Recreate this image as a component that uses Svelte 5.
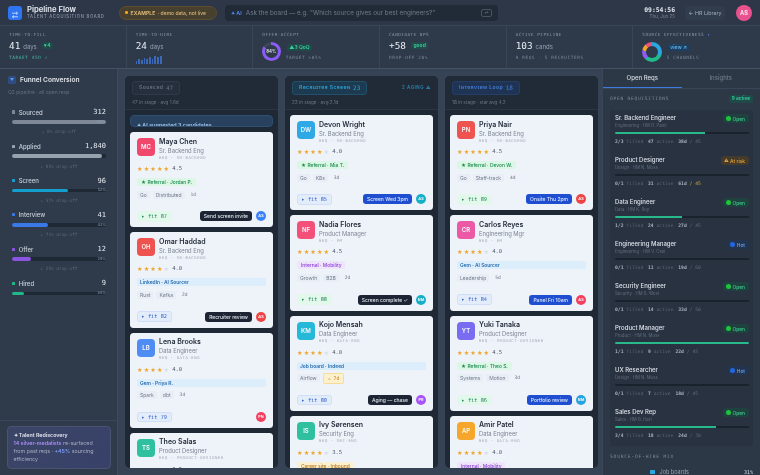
<script>
  const funnel = [
    { n: 'Sourced', c: '312', w: 100, col: '#7d8796', dot: '#7d8796', p: '100%', drop: '↓ 0% drop-off' },
    { n: 'Applied', c: '1,840', w: 96, col: '#98a1ae', dot: '#98a1ae', p: '', drop: '↓ 95% drop-off' },
    { n: 'Screen', c: '96', w: 60, col: '#159fd0', dot: '#159fd0', p: '52%', drop: '↓ 57% drop-off' },
    { n: 'Interview', c: '41', w: 38, col: '#3a78e6', dot: '#3a78e6', p: '43%', drop: '↓ 71% drop-off' },
    { n: 'Offer', c: '12', w: 20, col: '#8a55e0', dot: '#8a55e0', p: '29%', drop: '↓ 25% drop-off' },
    { n: 'Hired', c: '9', w: 13, col: '#1fb98a', dot: '#1fb98a', p: '84%', drop: '' }
  ];
  const cols = [
    {
      key: 'sourced', title: 'Sourced', num: '47', sub: '47 in stage · avg 1.6d', ai: true,
      cards: [
        { i: 'MC', g: '#f0476c', n: 'Maya Chen', r: 'Sr. Backend Eng', q: 'SR-BACKEND', s: 5, v: '4.5', t: 'Referral · Jordan P.', k: 'ref', sk: ['Go', 'Distributed'], d: '1d', fit: '87', ft: 'g', a: 'Send screen invite', ac: 'dark', o: 'AS', oc: '#3b82f6' },
        { i: 'OH', g: '#ee5350', n: 'Omar Haddad', r: 'Sr. Backend Eng', q: 'SR-BACKEND', s: 4, v: '4.0', t: 'LinkedIn · AI Sourcer', k: 'wide', sk: ['Rust', 'Kafka'], d: '2d', fit: '82', ft: 'b', a: 'Recruiter review', ac: 'dark', o: 'AS', oc: '#ef4444' },
        { i: 'LB', g: '#4f8df5', n: 'Lena Brooks', r: 'Data Engineer', q: 'DATA-ENG', s: 4, v: '4.0', t: 'Gem · Priya R.', k: 'wide', sk: ['Spark', 'dbt'], d: '3d', fit: '79', ft: 'b', a: '', o: 'PN', oc: '#f43f5e' },
        { i: 'TS', g: '#2fc0a0', n: 'Theo Salas', r: 'Product Designer', q: 'PRODUCT-DESIGNER', s: 4, v: '3.5', t: '', k: '', sk: [], d: '', fit: '', ft: 'b', a: '' }
      ]
    },
    {
      key: 'screen', title: 'Recruiter Screen', num: '23', sub: '23 in stage · avg 2.1d', aging: '2 AGING ⚠',
      cards: [
        { i: 'DW', g: '#2fa9e6', n: 'Devon Wright', r: 'Sr. Backend Eng', q: 'SR-BACKEND', s: 4, v: '4.0', t: 'Referral · Mia T.', k: 'ref', sk: ['Go', 'K8s'], d: '3d', fit: '85', ft: 'b', a: 'Screen Wed 3pm', ac: 'blue', o: 'AS', oc: '#14b0c8' },
        { i: 'NF', g: '#f4517a', n: 'Nadia Flores', r: 'Product Manager', q: 'PM', s: 5, v: '4.5', t: 'Internal · Mobility', k: 'int', sk: ['Growth', 'B2B'], d: '2d', fit: '88', ft: 'g', a: 'Screen complete ✓', ac: 'dark', o: 'NM', oc: '#14b0c8' },
        { i: 'KM', g: '#25b8d8', n: 'Kojo Mensah', r: 'Data Engineer', q: 'DATA-ENG', s: 4, v: '4.0', t: 'Job board · Indeed', k: 'wide', sk: ['Airflow'], warn: '⚠ 7d', d: '', fit: '80', ft: 'b', a: 'Aging — chase', ac: 'dark', o: 'PR', oc: '#a855f7' },
        { i: 'IS', g: '#2fc0a0', n: 'Ivy Sørensen', r: 'Security Eng', q: 'SEC-ENG', s: 4, v: '3.5', t: 'Career site · Inbound', k: 'car', sk: [], d: '', fit: '', ft: 'b', a: '' }
      ]
    },
    {
      key: 'loop', title: 'Interview Loop', num: '18', sub: '18 in stage · star avg 4.2',
      cards: [
        { i: 'PN', g: '#ee5350', n: 'Priya Nair', r: 'Sr. Backend Eng', q: 'SR-BACKEND', s: 5, v: '4.5', t: 'Referral · Devon W.', k: 'ref', sk: ['Go', 'Staff-track'], d: '4d', fit: '89', ft: 'g', a: 'Onsite Thu 2pm', ac: 'blue', o: 'AS', oc: '#ef4444' },
        { i: 'CR', g: '#ec5aa5', n: 'Carlos Reyes', r: 'Engineering Mgr', q: 'EM', s: 4, v: '4.0', t: 'Gem · AI Sourcer', k: 'wide', sk: ['Leadership'], d: '5d', fit: '84', ft: 'b', a: 'Panel Fri 10am', ac: 'blue', o: 'AS', oc: '#f43f5e' },
        { i: 'YT', g: '#7a6cf0', n: 'Yuki Tanaka', r: 'Product Designer', q: 'PRODUCT-DESIGNER', s: 5, v: '4.5', t: 'Referral · Theo S.', k: 'ref', sk: ['Systems', 'Motion'], d: '3d', fit: '86', ft: 'g', a: 'Portfolio review', ac: 'blue', o: 'NM', oc: '#25a5e0' },
        { i: 'AP', g: '#f5a62b', n: 'Amir Patel', r: 'Data Engineer', q: 'DATA-ENG', s: 4, v: '4.0', t: 'Internal · Mobility', k: 'int', sk: [], d: '', fit: '', ft: 'b', a: '' }
      ]
    }
  ];
  const reqs = [
    { n: 'Sr. Backend Engineer', m: 'Engineering · HM R. Patel', st: 'Open', f: '2/3', a: '47', d: '38d', l: '45', w: 67 },
    { n: 'Product Designer', m: 'Design · HM N. Moss', st: 'At risk', f: '0/1', a: '31', d: '61d', l: '45', w: 0, over: true },
    { n: 'Data Engineer', m: 'Data · HM K. Roy', st: 'Open', f: '1/2', a: '24', d: '27d', l: '45', w: 50 },
    { n: 'Engineering Manager', m: 'Engineering · HM V. Osei', st: 'Hot', f: '0/1', a: '11', d: '19d', l: '60', w: 0 },
    { n: 'Security Engineer', m: 'Security · HM S. West', st: 'Open', f: '0/1', a: '14', d: '33d', l: '50', w: 0 },
    { n: 'Product Manager', m: 'Product · HM N. Moss', st: 'Open', f: '1/1', a: '9', d: '22d', l: '45', w: 100 },
    { n: 'UX Researcher', m: 'Design · HM N. Moss', st: 'Hot', f: '0/1', a: '7', d: '18d', l: '45', w: 0 },
    { n: 'Sales Dev Rep', m: 'Sales · HM B. Hart', st: 'Open', f: '3/4', a: '18', d: '24d', l: '30', w: 75 }
  ];
  const spark = [3, 5, 4, 6, 5, 7, 5, 8, 7, 8];
  const stClass = { Open: 'open', 'At risk': 'risk', Hot: 'hot' };
</script>

<div class="app">
  <header class="top">
    <div class="logo">
      <svg viewBox="0 0 14 14" width="14" height="14"><path d="M4 5.2h5.5M8 3.8l1.6 1.4L8 6.6M10 8.8H4.5M6 7.4L4.4 8.8 6 10.2" fill="none" stroke="#dbe8ff" stroke-width=".8"/></svg>
    </div>
    <div class="brand">
      <div class="bt">Pipeline Flow</div>
      <div class="bs">TALENT ACQUISITION BOARD</div>
    </div>
    <div class="example"><i></i><b>EXAMPLE</b> · demo data, not live</div>
    <div class="ask">
      <span class="aitag">✦ AI</span>
      <span class="ph">Ask the board — e.g. "Which source gives our best engineers?"</span>
      <span class="kbd">↵</span>
    </div>
    <div class="clock"><div class="tm">09:54:56</div><div class="dt">Thu, Jun 25</div></div>
    <div class="lib">← HR Library</div>
    <div class="me">AS</div>
  </header>

  <section class="kpis">
    <div class="kpi">
      <div class="kl">TIME-TO-FILL</div>
      <div class="kv"><strong>41</strong><span>days</span><em class="chip">▾4</em></div>
      <div class="kf green">TARGET 45D ✓</div>
    </div>
    <div class="kpi">
      <div class="kl">TIME-TO-HIRE</div>
      <div class="kv"><strong>24</strong><span>days</span></div>
      <div class="spark">{#each spark as h}<i style="height:{h}px"></i>{/each}</div>
    </div>
    <div class="kpi">
      <div class="kl">OFFER-ACCEPT</div>
      <div class="kr">
        <div class="ring"><span>84%</span></div>
        <div class="kc"><em class="chip">▲3 QoQ</em><div class="kf">TARGET &gt;85%</div></div>
      </div>
    </div>
    <div class="kpi">
      <div class="kl">CANDIDATE NPS</div>
      <div class="kv"><strong>+58</strong><em class="chip mid">good</em></div>
      <div class="kf">DROP-OFF 28%</div>
    </div>
    <div class="kpi">
      <div class="kl">ACTIVE PIPELINE</div>
      <div class="kv"><strong>103</strong><span>cands</span></div>
      <div class="kf">9 REQS · 5 RECRUITERS</div>
    </div>
    <div class="kpi">
      <div class="kl">SOURCE EFFECTIVENESS <u>✦</u></div>
      <div class="kr">
        <div class="donut"></div>
        <div class="kc"><em class="chip bl">view ↗</em><div class="kf">5 CHANNELS</div></div>
      </div>
    </div>
  </section>

  <main class="body">
    <aside class="left">
      <div class="ftitle"><span class="fi">▼</span>Funnel Conversion</div>
      <div class="fsub">Q2 pipeline · all open reqs</div>
      <div class="frows">
        {#each funnel as f}
          <div class="frow">
            <div class="fh"><i style="background:{f.dot}"></i><span>{f.n}</span><b>{f.c}</b></div>
            <div class="ftrack"><div class="ffill" style="width:{f.w}%;background:{f.col}"></div>{#if f.p}<small>{f.p}</small>{/if}</div>
            {#if f.drop}<div class="fdrop">{f.drop}</div>{/if}
          </div>
        {/each}
      </div>
      <div class="lfoot">
        <div class="redis">
          <div class="rt">✦ Talent Rediscovery</div>
          <p><b>14 silver-medalists</b> re-surfaced from past reqs · <b class="bb">+45%</b> sourcing efficiency</p>
        </div>
      </div>
    </aside>

    <div class="board">
      {#each cols as c}
        <div class="col">
          <div class="ch">
            <div class="chr">
              <span class="stage {c.key}">{c.title}<b>{c.num}</b></span>
              {#if c.aging}<span class="aging">{c.aging}</span>{/if}
            </div>
            <div class="csub">{c.sub}</div>
          </div>
          <div class="cards">
            {#if c.ai}<div class="aib">✦ AI suggested 3 candidates</div>{/if}
            {#each c.cards as d}
              <article class="card">
                <div class="ctop">
                  <div class="av" style="background:{d.g}">{d.i}</div>
                  <div class="who">
                    <div class="nm">{d.n}</div>
                    <div class="rl">{d.r}</div>
                    <div class="rq">REQ · {d.q}</div>
                  </div>
                </div>
                <div class="stars"><span class="on">{'★'.repeat(d.s)}</span><span class="off">{'★'.repeat(5 - d.s)}</span><b>{d.v}</b></div>
                <div class="tagl">{#if d.t}<span class="tag {d.k}">{d.k === 'ref' ? '★ ' : ''}{d.t}</span>{/if}</div>
                <div class="skills">
                  {#each d.sk as s}<span>{s}</span>{/each}
                  {#if d.warn}<span class="warn">{d.warn}</span>{/if}
                  {#if d.d}<span class="age">{d.d}</span>{/if}
                </div>
                <div class="cf">
                  {#if d.fit}<span class="fit {d.ft}">▸ fit {d.fit}</span>{/if}
                  {#if d.a}<span class="act {d.ac}">{d.a}</span>{/if}
                  {#if d.o}<span class="own" style="background:{d.oc}">{d.o}</span>{/if}
                </div>
              </article>
            {/each}
          </div>
        </div>
      {/each}
    </div>

    <aside class="right">
      <div class="tabs"><span class="tab on">Open Reqs</span><span class="tab">Insights</span></div>
      <div class="sech"><span>OPEN REQUISITIONS</span><em>9 active</em></div>
      <div class="reqs">
        {#each reqs as r}
          <div class="req">
            <div class="rh">
              <div><div class="rn">{r.n}</div><div class="rm">{r.m}</div></div>
              <span class="st {stClass[r.st]}"><i></i>{r.st}</span>
            </div>
            <div class="rb"><div style="width:{r.w}%"></div></div>
            <div class="rs"><b>{r.f}</b> filled <b>{r.a}</b> active <b>{r.d}</b> <span class:over={r.over}>/ {r.l}</span></div>
          </div>
        {/each}
      </div>
      <div class="mix">SOURCE-OF-HIRE MIX</div>
      <div class="mixrow"><i></i><span>Job boards</span><b>31%</b></div>
    </aside>
  </main>
</div>

<style>
  :global(body) { margin: 0; background: #364354; }
  .app {
    width: 760px; height: 475px; overflow: hidden; display: flex; flex-direction: column;
    font-family: Inter, "Liberation Sans", sans-serif; color: #e6ebf2; background: #364354;
    filter: blur(0.4px);
  }
  .top { height: 26px; flex: none; display: flex; align-items: center; padding: 0 8px; background: #2d3747; box-sizing: border-box; border-bottom: 1px solid #3a4555; }
  .logo { width: 14px; height: 14px; border-radius: 3px; background: #2f75f2; flex: none; }
  .brand { margin-left: 5px; width: 92px; flex: none; }
  .bt { font-size: 7.7px; font-weight: 600; line-height: 8px; color: #e8edf4; white-space: nowrap; }
  .bs { font-size: 4.2px; letter-spacing: .72px; line-height: 5.5px; color: #8e98a8; font-weight: 500; white-space: nowrap; }
  .example { display: flex; align-items: center; width: 98px; height: 14px; box-sizing: border-box; border-radius: 7px; background: #48402f; border: 1px solid #5c4c30; padding-left: 5px; font-size: 5px; font-weight: 500; color: #dcb877; white-space: pre; flex: none; }
  .example i { width: 2.5px; height: 2.5px; border-radius: 50%; background: #f5a524; margin-right: 3px; }
  .example b { font-weight: 700; letter-spacing: .1px; margin-right: 1px; }
  .ask { margin-left: 8px; width: 273px; height: 16px; background: #212a37; border-radius: 4px; display: flex; align-items: center; padding: 0 6px; box-sizing: border-box; flex: none; }
  .aitag { color: #4f8df5; font-size: 5.4px; font-weight: 600; margin-right: 4px; white-space: nowrap; }
  .ph { color: #707b8c; font-size: 6.3px; white-space: nowrap; flex: 1; }
  .kbd { width: 11px; height: 8px; border: 1px solid #475262; border-radius: 2px; box-sizing: border-box; font-size: 4px; line-height: 6px; text-align: center; color: #8a95a5; }
  .clock { margin-left: auto; text-align: right; width: 31px; flex: none; }
  .tm { font: 600 6.4px/7px "DejaVu Sans Mono", monospace; color: #dfe5ed; white-space: nowrap; }
  .dt { font-size: 4.5px; line-height: 5px; color: #7a8596; white-space: nowrap; }
  .lib { margin-left: 10px; width: 40px; height: 14px; border-radius: 4px; background: #313c4c; color: #a3adbb; font-size: 5.3px; line-height: 14px; text-align: center; white-space: nowrap; flex: none; }
  .me { margin-left: 11px; width: 16px; height: 16px; border-radius: 50%; background: #e9528f; color: #fbe4ee; font-size: 5.6px; font-weight: 700; text-align: center; line-height: 16px; flex: none; }

  .kpis { height: 43px; flex: none; display: grid; grid-template-columns: repeat(6, 1fr); background: #2e3949; border-bottom: 1px solid #465263; box-sizing: border-box; }
  .kpi { border-right: 1px solid #3a4656; padding: 6px 9px 0; box-sizing: border-box; overflow: hidden; }
  .kpi:last-child { border-right: 0; }
  .kl { font: 500 4.3px/5px "DejaVu Sans Mono", monospace; letter-spacing: .5px; color: #8d97a6; white-space: nowrap; }
  .kl u { text-decoration: none; color: #4f8df5; }
  .kv { display: flex; align-items: center; height: 13px; margin-top: 2px; white-space: nowrap; }
  .kv strong { font: 500 9.4px/12px "DejaVu Sans Mono", monospace; color: #e9edf3; }
  .kv span { font-size: 6px; color: #98a2b1; margin: 1px 0 0 3px; }
  .chip { font-style: normal; font-size: 5px; font-weight: 600; height: 7.5px; line-height: 7.5px; padding: 0 2.5px; border-radius: 1.5px; background: #1f4a47; color: #37cfa0; display: inline-block; white-space: nowrap; }
  .kv .chip { margin-left: 5px; }
  .kv .chip.mid { margin-left: 5px; background: #234a48; }
  .chip.bl { background: #1f3f5e; color: #5cb1f0; }
  .kf { font: 500 4.4px/5px "DejaVu Sans Mono", monospace; letter-spacing: .6px; color: #7c8696; margin-top: 2.5px; white-space: nowrap; }
  .kf.green { color: #4ab9a2; }
  .spark { display: flex; align-items: flex-end; gap: 1px; height: 9px; margin-top: 2.5px; }
  .spark i { width: 1.7px; background: #3c68b5; display: block; }
  .kr { display: flex; align-items: center; height: 20px; margin-top: 4.5px; margin-left: -.5px; gap: 5px; }
  .kc .kf { margin-top: 3.5px; }
  .kc .chip { display: block; width: fit-content; margin-left: 1px; }
  .ring { width: 19px; height: 19px; border-radius: 50%; background: conic-gradient(#8b5cf6 0 84%, #3d4759 84%); display: flex; align-items: center; justify-content: center; flex: none; }
  .ring span { width: 13px; height: 13px; border-radius: 50%; background: #2e3949; font-size: 4.3px; font-weight: 700; text-align: center; line-height: 13px; color: #d8dde5; }
  .donut { width: 20px; height: 20px; border-radius: 50%; flex: none; background: conic-gradient(#2aa7e0 0 31%, #21bb8b 31% 62%, #8b5cf6 62% 78%, #f5a524 78% 88%, #e9527c 88%); position: relative; }
  .donut::after { content: ''; position: absolute; inset: 4px; border-radius: 50%; background: #2e3949; }

  .body { flex: 1; min-height: 0; display: flex; }
  .left { width: 118px; flex: none; background: #2f3a4a; border-right: 1px solid #3f4b5c; box-sizing: border-box; display: flex; flex-direction: column; padding-top: 6px; }
  .ftitle { display: flex; align-items: center; font-size: 6.6px; font-weight: 600; padding-left: 8px; height: 9px; color: #dfe4eb; white-space: nowrap; }
  .fi { width: 8px; height: 8px; background: #2f4d80; border-radius: 1.5px; font-size: 4px; text-align: center; line-height: 8px; color: #5b9bf8; margin-right: 4px; flex: none; }
  .fsub { font-size: 5px; color: #626d7e; padding-left: 8px; line-height: 6px; margin-top: 4.5px; white-space: nowrap; }
  .frows { padding: 13.5px 11px 0 12px; }
  .frow { height: 34.3px; }
  .fh { display: flex; align-items: center; height: 8px; font-size: 6px; font-weight: 500; color: #c9d0da; }
  .fh i { width: 3.2px; height: 3.2px; border-radius: .6px; margin-right: 3.5px; }
  .fh b { margin-left: auto; font: 500 7px/8px "DejaVu Sans Mono", monospace; color: #e6ebf2; }
  .ftrack { position: relative; height: 3.6px; margin-top: 4.2px; border-radius: 2px; background: #1f2835; }
  .ffill { height: 100%; border-radius: 2px; }
  .ftrack small { position: absolute; right: 0; top: -.5px; font-size: 3.8px; line-height: 4.6px; color: #8e98a8; }
  .fdrop { font: 4.4px/5px "DejaVu Sans Mono", monospace; text-align: center; color: #5f6a7b; margin-top: 5.5px; }
  .lfoot { margin-top: auto; border-top: 1px solid #3c4859; padding: 5px 6px 6px 7px; }
  .redis { height: 43px; box-sizing: border-box; border-radius: 4px; background: linear-gradient(135deg, #3b4566, #38426a); border: 1px solid #4b5373; padding: 5px 11px 5px 5.5px; font-size: 5.3px; line-height: 7.8px; color: #a5adbe; }
  .rt { color: #dfe3ec; font-weight: 600; font-size: 5.3px; line-height: 7px; white-space: nowrap; }
  .redis p { margin: 1px 0 0; }
  .redis b { color: #a98bf5; font-weight: 600; }
  .redis b.bb { color: #7b9df5; }

  .board { flex: 1; min-width: 0; display: flex; gap: 7px; padding: 7px 5px 7px 7px; box-sizing: border-box; height: 406px; }
  .col { width: 153px; flex: none; border-radius: 5px; background: #1f2835; overflow: hidden; display: flex; flex-direction: column; }
  .ch { height: 34px; flex: none; box-sizing: border-box; padding: 5px 7px 0; background: #212a37; border-bottom: 1px solid #2b3544; }
  .chr { display: flex; align-items: center; justify-content: space-between; height: 14px; }
  .stage { height: 14px; box-sizing: border-box; display: inline-flex; align-items: center; padding: 0 6px; border-radius: 3px; font: 600 5.1px/1 Inter, sans-serif; font-variant: small-caps; letter-spacing: .4px; border: 1px solid #2f3a49; background: #252f3d; color: #667182; white-space: nowrap; }
  .stage b { font: 500 6px/1 "DejaVu Sans Mono", monospace; margin-left: 2.5px; letter-spacing: 0; }
  .stage.screen { background: #1d3b50; border-color: #22506a; color: #2fa0d2; }
  .stage.loop { background: #1f3354; border-color: #253e66; color: #437fdc; }
  .aging { font: 600 4.4px/1 Inter, sans-serif; letter-spacing: .6px; color: #2a86b0; white-space: nowrap; }
  .csub { font-size: 4.7px; color: #6b7686; line-height: 6px; margin-top: 4px; white-space: nowrap; }
  .cards { flex: 1; min-height: 0; padding: 5px 5px 0; overflow: hidden; display: flex; flex-direction: column; gap: 5px; }
  .aib { height: 12px; flex: none; border-radius: 4px; background: #28415e; border: 1px solid #2f4f70; box-sizing: border-box; color: #9cc4ec; font-size: 5.4px; font-weight: 600; padding: 6px 0 0 6px; line-height: 7px; white-space: nowrap; overflow: hidden; }
  .card { flex: none; height: 95.3px; box-sizing: border-box; padding: 6px 7px 0; background: #eef2f9; border-radius: 3.5px; color: #1f2937; display: flex; flex-direction: column; }
  .ctop { display: flex; gap: 4px; height: 24px; }
  .av { width: 18px; height: 18px; border-radius: 4px; color: #f8f9fc; font-size: 6px; font-weight: 600; text-align: center; line-height: 18px; flex: none; }
  .nm { font-size: 7px; font-weight: 600; line-height: 8px; margin-top: -.5px; color: #252d3b; white-space: nowrap; }
  .rl { font-size: 5.8px; line-height: 7px; color: #7d8695; margin-top: 1px; white-space: nowrap; }
  .rq { font: 3.9px/5px "DejaVu Sans Mono", monospace; letter-spacing: .6px; color: #a3abb8; margin-top: 1px; white-space: nowrap; }
  .stars { display: flex; align-items: center; height: 7px; margin-top: 3px; font: 6.2px/7px "DejaVu Sans", sans-serif; letter-spacing: 1.1px; color: #f0a528; }
  .stars .off { color: #d9dee7; }
  .stars b { font: 400 5.5px/7px "DejaVu Sans Mono", monospace; letter-spacing: 0; color: #4f5867; margin-left: 2px; }
  .tagl { height: 8px; margin-top: 6px; display: flex; }
  .tag { font-size: 4.9px; font-weight: 500; line-height: 8px; padding: 0 4px; border-radius: 1.5px; white-space: nowrap; }
  .tag.ref { background: #dcf7e6; color: #1b8a50; }
  .tag.wide { flex: 1; background: #dcedfb; color: #2a6fb0; padding-left: 3px; font-weight: 600; }
  .tag.int { background: #efe5fb; color: #8a3fd8; }
  .tag.car { background: #fbf0cf; color: #b97a18; }
  .skills { height: 11px; margin-top: 3px; display: flex; align-items: center; gap: 3px; font-size: 5px; color: #717b8b; }
  .skills span { padding: 0 3px; white-space: nowrap; background: #e9eef6; border-radius: 1.5px; line-height: 8px; }
  .skills span.age { font: 4.6px/8px "DejaVu Sans Mono", monospace; color: #6a7483; background: none; }
  .skills span.warn { height: 11px; box-sizing: border-box; font: 500 4.8px/9px "DejaVu Sans Mono", monospace; background: #fdf0cc; border: 1px solid #f6dc96; color: #c27c12; padding: 0 4px; }
  .cf { margin-top: auto; margin-bottom: 5.5px; display: flex; align-items: center; height: 11px; }
  .fit { height: 10.5px; box-sizing: border-box; border-radius: 2.5px; font: 500 5.3px/9px "DejaVu Sans Mono", monospace; padding: 0 3.5px; white-space: nowrap; }
  .fit.g { background: #e2f8ea; border: 1px solid #e2f8ea; color: #22885a; }
  .fit.b { background: #e3ecfb; border: 1px solid #d0dff7; color: #2f63c9; }
  .act { height: 10px; margin-left: auto; border-radius: 3px; padding: 0 4px; font-size: 5px; font-weight: 500; line-height: 10px; white-space: nowrap; color: #dfe4ec; }
  .act.dark { background: #1d2534; }
  .act.blue { background: #1f4fd0; color: #dbe6fb; }
  .own { width: 10px; height: 10px; margin-left: 4px; border-radius: 50%; font-size: 3.8px; font-weight: 700; text-align: center; line-height: 10px; color: #f3f7fb; flex: none; }
  .fit + .own { margin-left: auto; }

  .right { width: 158px; flex: none; background: #2d3847; border-left: 1px solid #3a4657; box-sizing: border-box; display: flex; flex-direction: column; overflow: hidden; }
  .tabs { display: flex; height: 19px; flex: none; border-bottom: 1px solid #3a4657; }
  .tab { flex: 1; text-align: center; font-size: 6px; font-weight: 500; line-height: 18px; color: #6f7a8b; box-sizing: border-box; }
  .tab.on { color: #d8dee7; border-bottom: 1px solid #3d7be0; height: 19px; }
  .sech { display: flex; justify-content: space-between; align-items: center; padding: 5px 7px 0 7px; height: 10px; flex: none; }
  .sech span { font: 500 4.6px/1 "DejaVu Sans Mono", monospace; letter-spacing: .72px; color: #7e8899; }
  .sech em { font-style: normal; font-size: 4.8px; font-weight: 600; line-height: 7.5px; height: 7.5px; padding: 0 3px; border-radius: 2px; background: #1f4a47; color: #37cfa0; }
  .reqs { margin: 6px 7px 0 7px; background: #283241; border-radius: 2px; padding: 4px 4px 0 5px; flex: none; height: 336px; box-sizing: border-box; }
  .req { height: 42px; box-sizing: border-box; }
  .rh { display: flex; justify-content: space-between; align-items: flex-start; height: 16px; }
  .rn { font-size: 6px; font-weight: 500; line-height: 8px; color: #dde2ea; white-space: nowrap; }
  .rm { font-size: 4.3px; line-height: 6px; color: #626d7d; margin-top: 1px; white-space: nowrap; }
  .st { display: inline-flex; align-items: center; height: 9px; padding: 0 4px 0 3px; border-radius: 3px; font-size: 4.9px; font-weight: 500; white-space: nowrap; }
  .st i { width: 5px; height: 5px; border-radius: 50%; margin-right: 1.5px; }
  .st.open { background: #1f423f; color: #3dc98f; }
  .st.open i { background: #20c43c; }
  .st.risk { background: #443b2c; color: #e3a53a; }
  .st.risk i { display: none; }
  .st.risk::before { content: '⚠'; font-size: 4.6px; margin-right: 1.5px; }
  .st.hot { background: #22344f; color: #6da3ee; }
  .st.hot i { background: #2367e0; }
  .rb { height: 2.5px; margin-top: 1.5px; border-radius: 2px; background: #1a222e; overflow: hidden; }
  .rb div { height: 100%; background: #27b98a; }
  .rs { font: 4.7px/6px "DejaVu Sans Mono", monospace; color: #5e6979; margin-top: 4.5px; white-space: nowrap; }
  .rs b { color: #a8b1bd; font-weight: 600; margin-left: 2px; }
  .rs b:first-child { margin-left: 0; }
  .rs .over { color: #c8a13f; }
  .mix { font: 500 4.6px/6px "DejaVu Sans Mono", monospace; letter-spacing: .8px; color: #7e8899; padding: 8px 0 0 7px; flex: none; }
  .mixrow { display: flex; align-items: center; padding: 9px 7px 0 47px; font-size: 5.5px; color: #98a2b1; }
  .mixrow i { width: 4.5px; height: 4.5px; background: #2aa7e0; border-radius: .5px; margin-right: 5px; }
  .mixrow b { margin-left: auto; font: 500 5px/1 "DejaVu Sans Mono", monospace; color: #d8dee7; }
</style>
